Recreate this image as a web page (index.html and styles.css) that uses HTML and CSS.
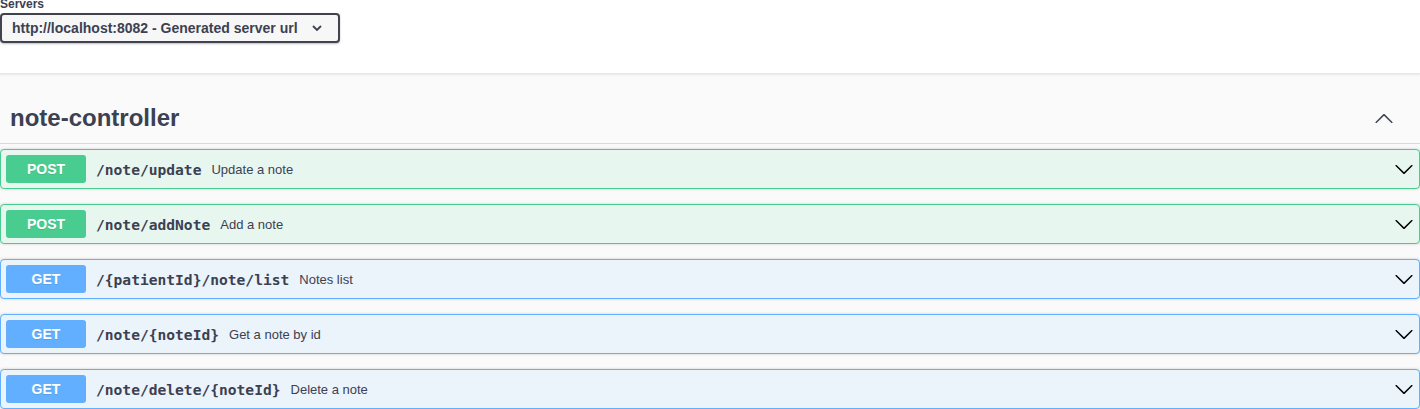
FILE: index.html
```html
<!DOCTYPE html>
<html>
<head>
<meta charset="utf-8">
<link rel="stylesheet" href="styles.css">
</head>
<body>
<div class="top">
  <span class="servers-label">Servers</span>
  <div class="select">
    <span>http://localhost:8082 - Generated server url</span>
    <svg class="select-arrow" width="10" height="6" viewBox="0 0 10 6"><path d="M1 1 L5 5 L9 1" fill="none" stroke="#3b4151" stroke-width="1.8"/></svg>
  </div>
</div>
<div class="main">
  <h3 class="tag">
    <span>note-controller</span>
    <svg class="tag-arrow" width="20" height="20" viewBox="0 0 20 20"><path d="M17.418 14.908c.272.268.709.268.979 0s.271-.701 0-.969l-7.908-7.83c-.27-.268-.707-.268-.979 0l-7.908 7.83c-.27.268-.27.701 0 .969.271.268.709.268.979 0L10 7.767l7.418 7.141z" fill="#3b4151"/></svg>
  </h3>

  <div class="opblock post">
    <span class="method">POST</span>
    <span class="path">/note/update</span>
    <span class="desc">Update a note</span>
    <svg class="arrow" width="20" height="20" viewBox="0 0 20 20"><path d="M17.418 6.109c.272-.268.709-.268.979 0s.271.701 0 .969l-7.908 7.83c-.27.268-.707.268-.979 0l-7.908-7.83c-.27-.268-.27-.701 0-.969.271-.268.709-.268.979 0L10 13.25l7.418-7.141z" fill="#000"/></svg>
  </div>
  <div class="opblock post">
    <span class="method">POST</span>
    <span class="path">/note/addNote</span>
    <span class="desc">Add a note</span>
    <svg class="arrow" width="20" height="20" viewBox="0 0 20 20"><path d="M17.418 6.109c.272-.268.709-.268.979 0s.271.701 0 .969l-7.908 7.83c-.27.268-.707.268-.979 0l-7.908-7.83c-.27-.268-.27-.701 0-.969.271-.268.709-.268.979 0L10 13.25l7.418-7.141z" fill="#000"/></svg>
  </div>
  <div class="opblock get">
    <span class="method">GET</span>
    <span class="path">/{patientId}/note/list</span>
    <span class="desc">Notes list</span>
    <svg class="arrow" width="20" height="20" viewBox="0 0 20 20"><path d="M17.418 6.109c.272-.268.709-.268.979 0s.271.701 0 .969l-7.908 7.83c-.27.268-.707.268-.979 0l-7.908-7.83c-.27-.268-.27-.701 0-.969.271-.268.709-.268.979 0L10 13.25l7.418-7.141z" fill="#000"/></svg>
  </div>
  <div class="opblock get">
    <span class="method">GET</span>
    <span class="path">/note/{noteId}</span>
    <span class="desc">Get a note by id</span>
    <svg class="arrow" width="20" height="20" viewBox="0 0 20 20"><path d="M17.418 6.109c.272-.268.709-.268.979 0s.271.701 0 .969l-7.908 7.83c-.27.268-.707.268-.979 0l-7.908-7.83c-.27-.268-.27-.701 0-.969.271-.268.709-.268.979 0L10 13.25l7.418-7.141z" fill="#000"/></svg>
  </div>
  <div class="opblock get">
    <span class="method">GET</span>
    <span class="path">/note/delete/{noteId}</span>
    <span class="desc">Delete a note</span>
    <svg class="arrow" width="20" height="20" viewBox="0 0 20 20"><path d="M17.418 6.109c.272-.268.709-.268.979 0s.271.701 0 .969l-7.908 7.83c-.27.268-.707.268-.979 0l-7.908-7.83c-.27-.268-.27-.701 0-.969.271-.268.709-.268.979 0L10 13.25l7.418-7.141z" fill="#000"/></svg>
  </div>
</div>
</body>
</html>
```
FILE: styles.css
```css
html, body {
  margin: 0;
  padding: 0;
}
body {
  font-family: "Liberation Sans", Arial, sans-serif;
  color: #3b4151;
  background: #fafafa;
  overflow: hidden;
}
.top {
  display: flow-root;
  background: #fff;
  height: 74px;
  border-bottom: 1px solid #e6e6e6;
  box-sizing: border-box;
  box-shadow: 0 1px 2px 0 rgba(0,0,0,.08);
}
.servers-label {
  display: block;
  font-size: 12px;
  font-weight: bold;
  line-height: 12px;
  height: 15px;
  margin-top: -2px;
}
.select {
  width: 340px;
  height: 30px;
  box-sizing: border-box;
  border: 2px solid #41444e;
  border-radius: 4px;
  background: #f7f7f7;
  box-shadow: 0 1px 2px 0 rgba(0,0,0,.25);
  display: flex;
  align-items: center;
  padding: 0 16px 0 10px;
  font-size: 14px;
  font-weight: bold;
  color: #3b4151;
}
.select span {
  flex: 1;
}
.select-arrow {
  display: block;
}
.main {
  padding-top: 17px;
}
.tag {
  margin: 0 0 5px;
  padding: 11px 26px 9px 10px;
  height: 53px;
  box-sizing: border-box;
  border-bottom: 1px solid #d8d9dc;
  display: flex;
  align-items: center;
  justify-content: space-between;
  font-size: 24px;
  font-weight: bold;
  line-height: 32px;
  color: #3b4151;
}
.tag-arrow {
  display: block;
}
.opblock {
  height: 40px;
  box-sizing: border-box;
  border: 1px solid;
  border-radius: 4px;
  margin: 0 0 15px;
  padding: 0 5px;
  display: flex;
  align-items: center;
  box-shadow: 0 0 3px rgba(0,0,0,.19);
}
.opblock.post {
  background: #e8f6f0;
  border-color: #49cc90;
}
.opblock.get {
  background: #ebf3fb;
  border-color: #61affe;
}
.method {
  width: 80px;
  height: 28px;
  border-radius: 3px;
  color: #fff;
  font-size: 14px;
  font-weight: bold;
  display: flex;
  align-items: center;
  justify-content: center;
  text-shadow: 0 1px 0 rgba(0,0,0,.1);
}
.post .method { background: #49cc90; }
.get .method { background: #61affe; }
.path {
  padding: 0 10px;
  font-family: "DejaVu Sans Mono", "Liberation Mono", monospace;
  font-weight: bold;
  font-size: 14.6px;
  color: #3b4151;
}
.desc {
  font-size: 13px;
  color: #3b4151;
  flex: 1;
}
.arrow {
  display: block;
}
```
